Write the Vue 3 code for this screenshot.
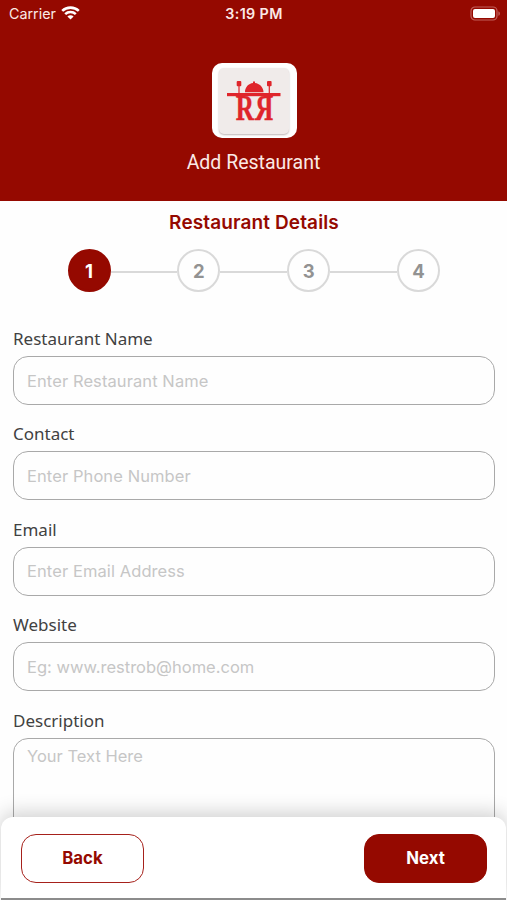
<script setup>
import { ref } from 'vue'

const steps = [1, 2, 3, 4]
const current = ref(1)
const fields = [
  { id: 'name', label: 'Restaurant Name', hint: 'Enter Restaurant Name' },
  { id: 'contact', label: 'Contact', hint: 'Enter Phone Number' },
  { id: 'email', label: 'Email', hint: 'Enter Email Address' },
  { id: 'website', label: 'Website', hint: 'Eg: www.restrob@home.com' },
]
</script>

<template>
  <div class="screen">
    <header class="header">
      <div class="status">
        <div class="carrier">
          <span>Carrier</span>
          <svg width="19" height="14" viewBox="0 0 19 14" fill="none" stroke="#fff" stroke-width="2.6">
            <path d="M1.200 4.900C5.800.5 13.200.5 17.800 4.900" />
            <path d="M4.200 8.100c2.900-2.800 7.700-2.800 10.600 0" />
            <path d="M9.500 13.600 6.400 10.500c1.700-1.600 4.500-1.600 6.200 0Z" fill="#fff" stroke="none" />
          </svg>
        </div>
        <span class="clock">3:19 PM</span>
        <svg class="battery" width="31" height="15" viewBox="0 0 31 15">
          <rect x="1" y="1" width="26" height="13" rx="4" fill="none" stroke="#c2605b" stroke-width="1.2" />
          <rect x="3" y="3" width="22" height="9" rx="2" fill="#fff" />
          <path d="M28.400 5.200c2 .8 2 3.800 0 4.600Z" fill="#c2605b" />
        </svg>
      </div>
      <div class="logo">
        <svg width="70" height="66" viewBox="0 0 70 66">
          <g fill="#df252b">
            <rect x="8" y="25" width="53.500" height="3.200" />
            <path d="M26 24.200c0-5.200 3.700-8.700 8-9.200v-1.600h2v1.600c4.300.5 8.500 4 8.500 9.200Z" />
            <rect x="17.700" y="13" width="4.600" height="5.200" rx="1" />
            <rect x="19.400" y="17" width="1.200" height="8" />
            <rect x="48" y="13" width="4.600" height="5.200" rx="1" />
            <rect x="49.700" y="17" width="1.200" height="8" />
            <text class="glyph" transform="translate(16.800 52.300) scale(.74 1.060)">R</text>
            <text class="glyph" transform="translate(54.200 52.300) scale(-.74 1.060)">R</text>
          </g>
        </svg>
      </div>
      <div class="header-title">Add Restaurant</div>
    </header>

    <main class="content">
      <h1 class="heading">Restaurant Details</h1>
      <div class="stepper">
        <template v-for="s in steps" :key="s">
          <span v-if="s > 1" class="line"></span>
          <span class="step" :class="{ active: s === current }">{{ s }}</span>
        </template>
      </div>
      <form class="form" @submit.prevent>
        <div v-for="f in fields" :key="f.id" class="field">
          <label :for="f.id">{{ f.label }}</label>
          <input :id="f.id" class="control" :class="f.id" :placeholder="f.hint" />
        </div>
        <div class="field">
          <label for="description">Description</label>
          <textarea id="description" class="control area" placeholder="Your Text Here"></textarea>
        </div>
      </form>
    </main>

    <footer class="footer">
      <button class="btn back">Back</button>
      <button class="btn next">Next</button>
    </footer>
  </div>
</template>

<style>
body {
  background: #fff;
}
</style>

<style scoped>
* {
  box-sizing: border-box;
}
.screen {
  width: 507px;
  height: 900px;
  display: flex;
  flex-direction: column;
  overflow: hidden;
  background: #fefefe;
  font-family: Inter, sans-serif;
}
.header {
  flex: none;
  height: 201px;
  background: #950900;
  color: #fff;
  display: flex;
  flex-direction: column;
  align-items: center;
}
.status {
  width: 100%;
  height: 27px;
  padding: 0 6px 0 9px;
  display: grid;
  grid-template-columns: 1fr auto 1fr;
  align-items: center;
  font-size: 14.300px;
  color: #fbe9e6;
}
.carrier {
  display: flex;
  align-items: center;
  gap: 5px;
}
.carrier svg {
  margin-top: -2px;
}
.clock {
  margin-right: 2px;
  font-weight: 600;
  font-size: 14.300px;
  letter-spacing: .4px;
}
.battery {
  justify-self: end;
}
.logo {
  margin: 36px 0 0 1px;
  width: 85px;
  height: 75px;
  border-radius: 10px;
  background: #fff;
  display: flex;
  align-items: center;
  justify-content: center;
}
.logo svg {
  background: #f0ebea;
  border-radius: 5px;
  box-shadow: 0 1px 2px #bdb5b5;
}
.glyph {
  font: 700 34px "Liberation Serif", serif;
  stroke: #df252b;
  stroke-width: .4px;
}
.header-title {
  margin-top: 13px;
  font: 400 19.500px/24px Roboto, sans-serif;
  color: #fbe9e6;
}
.content {
  flex: 1;
  min-height: 0;
  overflow: hidden;
}
.heading {
  margin: 9px 0 0 1px;
  text-align: center;
  font-size: 19px;
  letter-spacing: .12px;
  line-height: 26px;
  font-weight: 600;
  color: #950900;
}
.stepper {
  margin-top: 13px;
  padding: 0 67px 0 67.500px;
  height: 43px;
  display: flex;
  align-items: center;
}
.step {
  flex: none;
  width: 43px;
  height: 43px;
  border: 2px solid #d9d9d9;
  border-radius: 50%;
  display: flex;
  align-items: center;
  justify-content: center;
  font-size: 18.500px;
  font-weight: 700;
  color: #929292;
}
.step.active {
  background: #950900;
  border-color: #950900;
  color: #fff;
}
.line {
  flex: 1;
  height: 2px;
  margin-top: 3px;
  background: #d9d9d9;
}
.form {
  padding: 35px 12.500px 0 13px;
  display: flex;
  flex-direction: column;
  gap: 17.400px;
}
.field {
  display: flex;
  flex-direction: column;
  gap: 5px;
}
label {
  font: 400 17px/24px "Noto Sans", sans-serif;
  color: #414141;
}
.control {
  width: 100%;
  height: 49px;
  padding: 0 13px;
  border: 1.400px solid #a9a9a9;
  border-radius: 15px;
  background: transparent;
  outline: none;
  font: 400 16.500px/22px Inter, sans-serif;
  letter-spacing: .09px;
}
.control.website {
  letter-spacing: 0;
}
.control::placeholder {
  color: #c6c6c6;
  opacity: 1;
}
.area {
  height: 150px;
  padding-top: 6px;
  letter-spacing: 0;
  resize: none;
  display: block;
}
.footer {
  flex: none;
  height: 83px;
  margin: 0 1px;
  padding: 1px 19px 0 20px;
  display: flex;
  align-items: center;
  justify-content: space-between;
  background: #fff;
  border-radius: 12px 12px 0 0;
  border-bottom: 2px solid #8c8c8c;
  box-shadow: 0 -4px 20px rgba(0, 0, 0, .19);
  position: relative;
}
.btn {
  width: 123px;
  height: 49px;
  border: 1.400px solid #a6211b;
  border-radius: 15px;
  font: 700 16.800px/22px Inter, sans-serif;
}
.back {
  background: #fff;
  color: #950900;
}
.next {
  background: #950900;
  border-color: #950900;
  color: #fff;
}
</style>
